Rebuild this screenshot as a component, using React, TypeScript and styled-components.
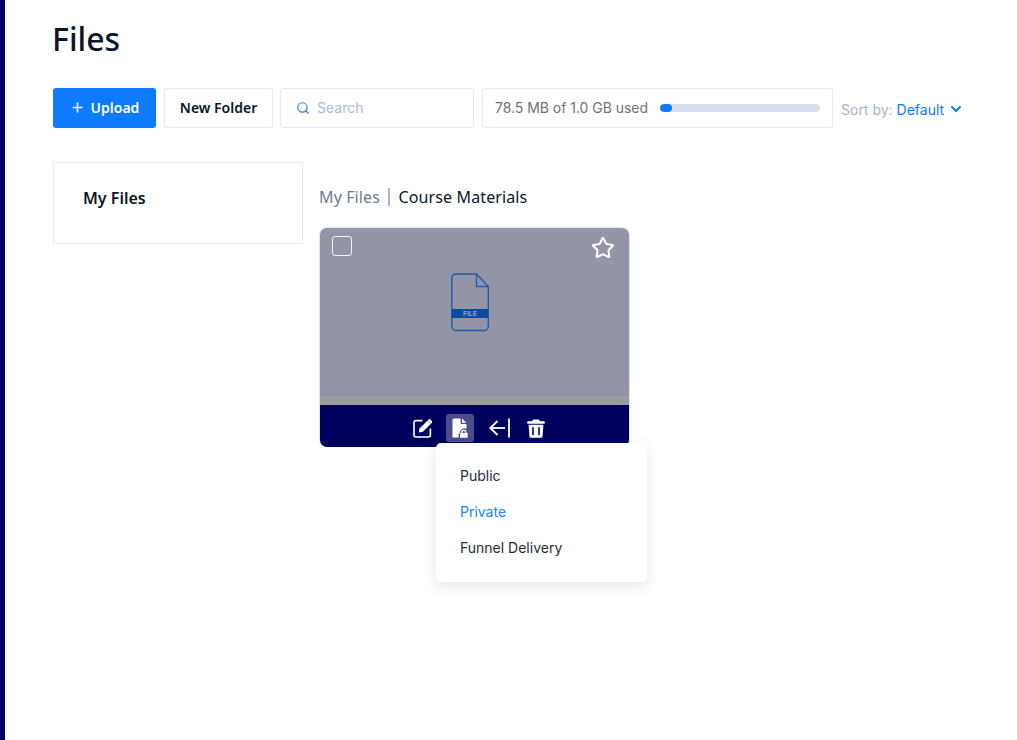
import React from 'react';
import styled, { createGlobalStyle } from 'styled-components';
import { Plus, Search, ChevronDown, Star } from 'lucide-react';

const GlobalStyle = createGlobalStyle`
  html, body {
    margin: 0;
    padding: 0;
    background: #fff;
    font-family: Inter, "Liberation Sans", sans-serif;
  }
  * { box-sizing: border-box; }
`;

const Page = styled.div`
  display: flex;
  min-height: 740px;
`;

const SideStrip = styled.div`
  width: 5px;
  background: #00005f;
  flex-shrink: 0;
`;

const Main = styled.main`
  flex: 1;
  padding: 18px 0 0 48px;
`;

const Title = styled.h1`
  margin: 0 0 0 -1px;
  font-family: "Noto Sans", sans-serif;
  font-size: 32px;
  line-height: 42px;
  font-weight: 500;
  color: #0a1628;
`;

const Toolbar = styled.div`
  display: flex;
  align-items: center;
  gap: 8px;
  margin-top: 28px;
  height: 40px;
`;

const UploadButton = styled.button`
  width: 103px;
  height: 40px;
  display: flex;
  align-items: center;
  justify-content: center;
  gap: 6px;
  border: 0;
  border-radius: 3px;
  background: #0d7aff;
  color: #fff;
  font-family: "Noto Sans", sans-serif;
  font-size: 14px;
  font-weight: 600;
  padding: 0 0 2px;
`;

const OutlineButton = styled.button`
  width: 109px;
  height: 40px;
  margin-right: -1px;
  border: 1px solid #e4e9f2;
  border-radius: 3px;
  background: #fff;
  color: #0a1628;
  font-family: "Noto Sans", sans-serif;
  font-size: 14px;
  font-weight: 600;
  padding: 0 0 2px;
`;

const SearchBox = styled.div`
  width: 194px;
  height: 40px;
  display: flex;
  align-items: center;
  gap: 7px;
  padding: 0 0 1px 15px;
  border: 1px solid #e4e9f2;
  border-radius: 3px;
  color: #adbbd3;
  font-size: 14px;
  svg { color: #2a7de1; }
`;

const UsageBox = styled.div`
  width: 351px;
  height: 40px;
  display: flex;
  align-items: center;
  gap: 12px;
  padding: 0 0 1px 12px;
  border: 1px solid #e4e9f2;
  border-radius: 3px;
  color: #6f7279;
  font-size: 14px;
  letter-spacing: -0.03px;
`;

const Meter = styled.div`
  width: 160px;
  height: 8px;
  border-radius: 4px;
  background: #d6dfeb;
  overflow: hidden;
`;

const MeterFill = styled.div`
  height: 100%;
  background: #0d7aff;
  border-radius: 4px;
`;

const SortBy = styled.div`
  display: flex;
  align-items: center;
  padding-top: 2px;
  font-size: 14px;
  color: #a8b5cb;
  white-space: nowrap;
`;

const SortValue = styled.span`
  color: #0d7aff;
  margin-left: 4px;
  margin-right: 4px;
`;

const Content = styled.div`
  display: flex;
  margin-top: 34px;
  align-items: flex-start;
`;

const FolderPanel = styled.aside`
  width: 250px;
  height: 82px;
  padding: 25px 29px;
  border: 1px solid #e6ebf1;
  font-family: "Noto Sans", sans-serif;
  font-size: 16px;
  line-height: 20px;
  font-weight: 600;
  color: #0a1628;
`;

const FilesColumn = styled.section`
  margin-left: 16px;
  padding-top: 25px;
`;

const Breadcrumb = styled.div`
  display: flex;
  align-items: center;
  height: 20px;
  font-family: "Noto Sans", sans-serif;
  font-size: 16px;
  letter-spacing: 0.12px;
  color: #0a1628;
`;

const CrumbParent = styled.span`
  color: #6f7b8f;
`;

const CrumbDivider = styled.span`
  width: 1.5px;
  height: 18px;
  margin: 0 9px 0 8px;
  background: #a8b5cb;
`;

const FileCard = styled.div`
  position: relative;
  width: 311px;
  height: 220px;
  margin-top: 20px;
  border: 1px solid #e4e7ee;
  border-bottom: 0;
  border-radius: 8px;
  display: flex;
  flex-direction: column;
`;

const Preview = styled.div`
  height: 167px;
  background: #9395a7;
  border-radius: 7px 7px 0 0;
  display: flex;
  justify-content: space-between;
  align-items: flex-start;
  padding: 8px 14px 0 12px;
`;

const PreviewFooter = styled.div`
  height: 10px;
  background: #9a9ba5;
  border-top: 1px solid #8f909f;
`;

const Checkbox = styled.span`
  width: 20px;
  height: 20px;
  border: 1px solid #f2f3f6;
  border-radius: 3px;
`;

const FileGlyph = styled.svg`
  margin: 37px 4px 0 0;
`;

const StarWrap = styled.span`
  color: #fff;
  height: 24px;
`;

const ActionBar = styled.div`
  height: 42px;
  background: #00005f;
  border-radius: 0 0 7px 7px;
  display: flex;
  justify-content: center;
  align-items: center;
  gap: 10px;
  padding: 4px 0 0 9px;
  color: #fff;
`;

const ActionIcon = styled.span<{ $active?: boolean }>`
  width: 28px;
  height: 28px;
  display: flex;
  align-items: center;
  justify-content: center;
  border-radius: 3px;
  background: ${(p) => (p.$active ? '#4c4c8c' : 'transparent')};
`;

const Menu = styled.ul`
  position: absolute;
  left: 116px;
  top: 215px;
  width: 211px;
  height: 139px;
  margin: 0;
  padding: 15px 0 0 24px;
  list-style: none;
  background: #fff;
  border-radius: 5px;
  box-shadow: 0 4px 14px rgba(40, 50, 80, 0.12);
`;

const MenuItem = styled.li<{ $selected?: boolean }>`
  height: 36px;
  line-height: 36px;
  font-size: 14px;
  color: ${(p) => (p.$selected ? '#1a84ff' : '#262c3a')};
`;

function EditIcon() {
  return (
    <svg width="20" height="20" viewBox="-1 0 20 20" fill="none">
      <path d="M9.5 2.6H3a2 2 0 0 0-2 2V17a2 2 0 0 0 2 2h12.4a2 2 0 0 0 2-2v-6.5" stroke="#fff" strokeWidth="1.6" />
      <path d="M5.7 14.5l.8-4L14.6 2.4l3.4 3.4-8.1 8z" fill="#fff" />
      <path d="M15.6 1.4a1.3 1.3 0 0 1 1.9 0l1.5 1.5a1.3 1.3 0 0 1 0 1.9l-.9.9-3.4-3.4z" fill="#fff" />
    </svg>
  );
}

function FileLockIcon() {
  return (
    <svg width="16" height="20" viewBox="0 0 16 20" fill="#fff">
      <path d="M2 .5h6.6v5.6H14.5v4.7a4.6 4.6 0 0 0-6.6 3.5v1H6.7v4.2H2A1.5 1.5 0 0 1 .5 19V2A1.5 1.5 0 0 1 2 .5z" />
      <path d="M10 .6l4.4 4.2H10z" />
      <path d="M8 15h1.2v-.8a2.6 2.6 0 0 1 5.2 0v.8h1.3v4.7H8zm2.6 0h2.4v-.8a1.2 1.2 0 0 0-2.4 0z" fillRule="evenodd" />
    </svg>
  );
}

function ArrowBarIcon() {
  return (
    <svg width="23" height="20" viewBox="-1.5 0 23 20" fill="none" stroke="#fff" strokeWidth="1.8">
      <path d="M20.5 .5v19" />
      <path d="M16.5 10H1.5" />
      <path d="M9 3l-7.2 7L9 17" />
    </svg>
  );
}

function TrashIcon() {
  return (
    <svg width="18" height="19" viewBox="0 0 18 19" fill="#fff">
      <path d="M6.5 .5h5a1 1 0 0 1 .9.6l.6 1.2h4a.8.8 0 0 1 .8.8V4a.7.7 0 0 1-.7.7H.9A.7.7 0 0 1 .2 4V3.1a.8.8 0 0 1 .8-.8h4l.6-1.2a1 1 0 0 1 .9-.6z" />
      <path d="M1.6 5.8h14.8l-.8 11.4a1.7 1.7 0 0 1-1.7 1.6H4.1a1.7 1.7 0 0 1-1.7-1.6zM6 8a.8.8 0 0 0-.8.8v6.6a.8.8 0 0 0 1.6 0V8.8A.8.8 0 0 0 6 8zm6 0a.8.8 0 0 0-.8.8v6.6a.8.8 0 0 0 1.6 0V8.8A.8.8 0 0 0 12 8z" fillRule="evenodd" />
    </svg>
  );
}

function FileTypeIcon() {
  return (
    <FileGlyph width="38" height="59" viewBox="0 0 38 59" fill="none">
      <path d="M5 1h20.5L37.3 13.5V53a4.5 4.5 0 0 1-4.5 4.5H5A4.5 4.5 0 0 1 .8 53V5A4 4 0 0 1 5 1z" stroke="#1f5aa8" strokeWidth="1.4" />
      <path d="M25.5 1v12.5h11.8" stroke="#1f5aa8" strokeWidth="1.4" />
      <rect x="1" y="36" width="36" height="9" fill="#0a4a9f" />
      <text x="19" y="43" textAnchor="middle" fontFamily="Liberation Sans, sans-serif" fontSize="6.5" fontWeight="700" fill="#9aa3bd">FILE</text>
    </FileGlyph>
  );
}

export default function App() {
  return (
    <Page>
      <GlobalStyle />
      <SideStrip />
      <Main>
        <Title>Files</Title>
        <Toolbar>
          <UploadButton>
            <Plus size={15} strokeWidth={2.5} />
            Upload
          </UploadButton>
          <OutlineButton>New Folder</OutlineButton>
          <SearchBox>
            <Search size={14} strokeWidth={2} />
            Search
          </SearchBox>
          <UsageBox>
            78.5 MB of 1.0 GB used
            <Meter>
              <MeterFill style={{ width: `${(78.5 / 1024) * 100}%` }} />
            </Meter>
          </UsageBox>
          <SortBy>
            Sort by:
            <SortValue>Default</SortValue>
            <ChevronDown size={16} color="#0d7aff" strokeWidth={3} />
          </SortBy>
        </Toolbar>
        <Content>
          <FolderPanel>My Files</FolderPanel>
          <FilesColumn>
            <Breadcrumb>
              <CrumbParent>My Files</CrumbParent>
              <CrumbDivider />
              Course Materials
            </Breadcrumb>
            <FileCard>
              <Preview>
                <Checkbox />
                <FileTypeIcon />
                <StarWrap>
                  <Star size={24} strokeWidth={2} />
                </StarWrap>
              </Preview>
              <PreviewFooter />
              <ActionBar>
                <ActionIcon>
                  <EditIcon />
                </ActionIcon>
                <ActionIcon $active>
                  <FileLockIcon />
                </ActionIcon>
                <ActionIcon>
                  <ArrowBarIcon />
                </ActionIcon>
                <ActionIcon>
                  <TrashIcon />
                </ActionIcon>
              </ActionBar>
              <Menu>
                <MenuItem>Public</MenuItem>
                <MenuItem $selected>Private</MenuItem>
                <MenuItem>Funnel Delivery</MenuItem>
              </Menu>
            </FileCard>
          </FilesColumn>
        </Content>
      </Main>
    </Page>
  );
}
